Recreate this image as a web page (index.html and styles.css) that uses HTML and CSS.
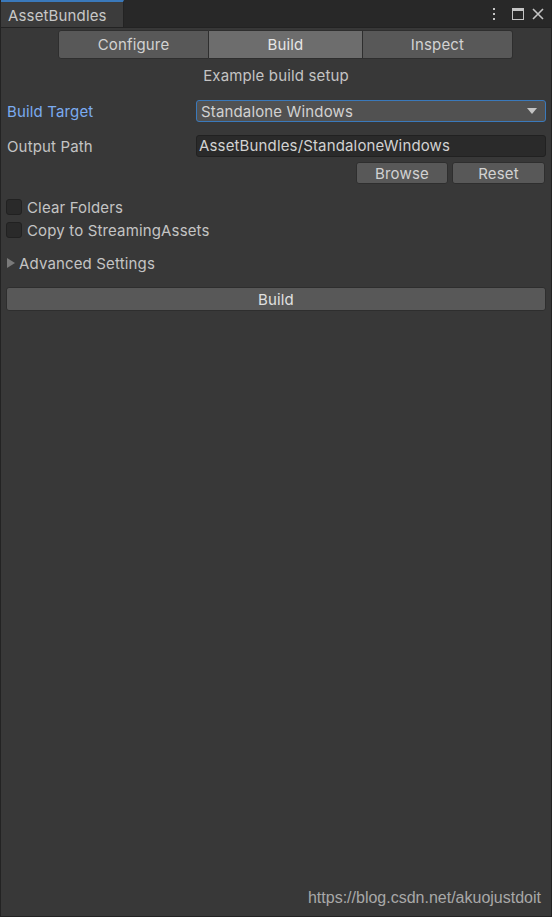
FILE: index.html
```html
<!DOCTYPE html>
<html>
<head>
<meta charset="utf-8">
<link rel="stylesheet" href="styles.css">
</head>
<body>
<div class="window">
  <div class="tabbar">
    <div class="tab">AssetBundles</div>
    <div class="tabtools">
      <svg class="dots" width="6" height="14" viewBox="0 0 6 14"><rect x="2" y="1" width="2" height="2" fill="#c4c4c4"/><rect x="2" y="6" width="2" height="2" fill="#c4c4c4"/><rect x="2" y="11" width="2" height="2" fill="#c4c4c4"/></svg>
      <svg width="14" height="14" viewBox="0 0 14 14"><rect x="1.5" y="1.5" width="11" height="11" fill="none" stroke="#c4c4c4"/><rect x="1" y="1" width="12" height="3" fill="#c4c4c4"/></svg>
      <svg width="14" height="14" viewBox="0 0 14 14"><path d="M2 2 L12 12 M12 2 L2 12" stroke="#c4c4c4" stroke-width="1.6"/></svg>
    </div>
  </div>
  <div class="content">
    <div class="toolbar">
      <div class="seg">Configure</div>
      <div class="seg active">Build</div>
      <div class="seg">Inspect</div>
    </div>
    <div class="caption">Example build setup</div>
    <div class="row first">
      <div class="label focused">Build Target</div>
      <div class="dropdown"><span>Standalone Windows</span>
        <svg width="10" height="6" viewBox="0 0 10 6"><path d="M0 0 H10 L5 6 Z" fill="#c4c4c4"/></svg>
      </div>
    </div>
    <div class="row">
      <div class="label">Output Path</div>
      <div class="textfield">AssetBundles/StandaloneWindows</div>
    </div>
    <div class="btnrow">
      <div class="btn">Browse</div>
      <div class="btn">Reset</div>
    </div>
    <div class="checks">
      <div class="check"><span class="box"></span>Clear Folders</div>
      <div class="check"><span class="box"></span>Copy to StreamingAssets</div>
    </div>
    <div class="foldout">
      <svg width="8" height="10" viewBox="0 0 8 10"><path d="M0 0 L8 5 L0 10 Z" fill="#7a7a7a"/></svg>
      <span>Advanced Settings</span>
    </div>
    <div class="bigbtn">Build</div>
    <div class="spacer"></div>
    <div class="watermark">https://blog.csdn.net/akuojustdoit</div>
  </div>
</div>
</body>
</html>
```
FILE: styles.css
```css
html, body {
  margin: 0;
  padding: 0;
  background: #383838;
}
.window {
  width: 552px;
  height: 917px;
  box-sizing: border-box;
  border: 1px solid #232323;
  border-top: none;
  display: flex;
  flex-direction: column;
  font-family: Inter, "Noto Sans", sans-serif;
  font-size: 15px;
  letter-spacing: 0.15px;
  color: #c4c4c4;
  overflow: hidden;
}
.tabbar {
  height: 27px;
  background: #282828;
  display: flex;
  align-items: stretch;
  flex-shrink: 0;
}
.tab {
  width: 123px;
  box-sizing: border-box;
  background: #3c3c3c;
  border-top: 2px solid #3a79bb;
  border-right: 1px solid #232323;
  padding: 4px 0 0 7px;
  color: #c8c8c8;
}
.tabtools {
  margin-left: auto;
  display: flex;
  align-items: center;
  gap: 6px;
  padding: 1px 6px 0 0;
}
.dots {
  margin-right: 8px;
}
.content {
  flex: 1;
  display: flex;
  flex-direction: column;
  border-top: 1px solid #232323;
}
.toolbar {
  display: flex;
  margin: 2px 0 0 57px;
  width: 455px;
  height: 29px;
}
.seg {
  flex: 1;
  background: #585858;
  border: 1px solid #2e2e2e;
  border-left: none;
  display: flex;
  align-items: center;
  justify-content: center;
  color: #d2d2d2;
}
.seg:first-child {
  border-left: 1px solid #2e2e2e;
  border-radius: 3px 0 0 3px;
}
.seg:last-child {
  border-radius: 0 3px 3px 0;
}
.seg.active {
  background: #6d6d6d;
  color: #e6e6e6;
  flex: 0 0 153px;
}
.caption {
  text-align: center;
  height: 20px;
  line-height: 20px;
  margin-top: 7px;
  color: #c4c4c4;
}
.row {
  display: flex;
  align-items: center;
  height: 22px;
  margin: 0 5px 0 6px;
}
.row.first {
  margin-top: 14px;
  margin-bottom: 13px;
}
.label {
  width: 189px;
  flex-shrink: 0;
  color: #c4c4c4;
}
.label.focused {
  color: #7babf0;
}
.dropdown {
  flex: 1;
  height: 22px;
  box-sizing: border-box;
  background: #515151;
  border: 1px solid #3a79bb;
  border-radius: 3px;
  display: flex;
  align-items: center;
  justify-content: space-between;
  padding: 0 8px 0 4px;
  color: #d2d2d2;
}
.textfield {
  flex: 1;
  height: 22px;
  box-sizing: border-box;
  background: #2a2a2a;
  border: 1px solid #212121;
  border-radius: 3px;
  padding: 0 2px;
  line-height: 20px;
  color: #d2d2d2;
}
.btnrow {
  display: flex;
  justify-content: flex-end;
  gap: 4px;
  margin: 5px 6px 0 0;
}
.btn {
  width: 92px;
  height: 22px;
  box-sizing: border-box;
  background: #585858;
  border: 1px solid #2e2e2e;
  border-radius: 3px;
  display: flex;
  align-items: center;
  justify-content: center;
  color: #d2d2d2;
}
.btn:last-child {
  width: 93px;
}
.checks {
  margin: 15px 0 0 5px;
  display: flex;
  flex-direction: column;
  gap: 7px;
}
.check {
  display: flex;
  align-items: center;
  height: 16px;
  gap: 5px;
}
.box {
  width: 16px;
  height: 16px;
  box-sizing: border-box;
  background: #2a2a2a;
  border: 1px solid #212121;
  border-radius: 3px;
}
.foldout {
  display: flex;
  align-items: center;
  gap: 4px;
  margin: 16px 0 0 6px;
  height: 18px;
}
.bigbtn {
  margin: 15px 5px 0 5px;
  height: 24px;
  box-sizing: border-box;
  background: #585858;
  border: 1px solid #2e2e2e;
  border-radius: 3px;
  display: flex;
  align-items: center;
  justify-content: center;
  color: #e0e0e0;
}
.spacer {
  flex: 1;
}
.watermark {
  font-family: "Liberation Sans", Arial, sans-serif;
  font-size: 16px;
  letter-spacing: 0;
  color: #a8a8a8;
  text-align: right;
  padding: 0 10px 9px 0;
}
```
